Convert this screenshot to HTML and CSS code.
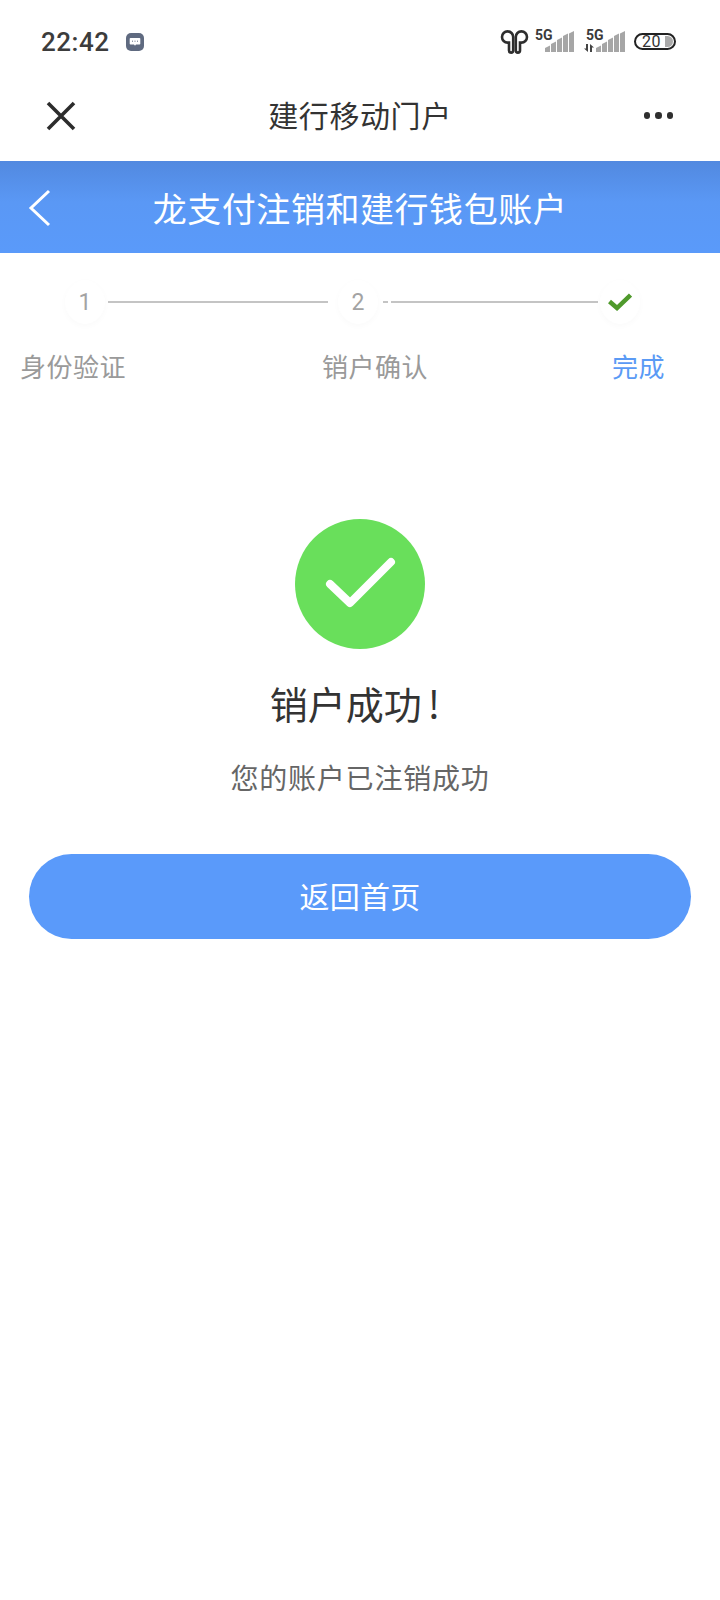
FILE: index.html
```html
<!DOCTYPE html>
<html lang="zh-CN">
<head>
<meta charset="utf-8">
<title>建行移动门户</title>
<link rel="stylesheet" href="styles.css">
</head>
<body>
<div class="status">
  <div class="status-left">
    <span class="time">22:42</span>
    <svg class="msg" width="18" height="18" viewBox="0 0 18 18"><rect width="18" height="18" rx="5" fill="#5f6a80"/><path d="M4.500 5h9a.8.8 0 0 1 .8.8v5a.8.8 0 0 1-.8.8H10l-1 1.200-1-1.200H4.500a.8.8 0 0 1-.8-.8v-5a.8.8 0 0 1 .8-.8z" fill="#fff"/><path d="M6 8.200h1M8.500 8.200h1M11 8.200h1" stroke="#5f6a80" stroke-width="1"/></svg>
  </div>
  <div class="status-right">
    <svg class="buds" width="27" height="24" viewBox="0 0 27 24" fill="none" stroke="#2e2e2e" stroke-width="2.600"><path d="M12.200 20.500V7A5.600 5.600 0 1 0 6.600 12.600H8v7.900a2.100 2.100 0 0 0 4.200 0z"/><path d="M14.800 20.500V7A5.600 5.600 0 1 1 20.400 12.600H19v7.900a2.100 2.100 0 0 1-4.200 0z"/></svg>
    <div class="net">
      <span class="g">5G</span>
      <svg class="bars" width="29" height="21" viewBox="0 0 29 21" fill="#a6a6a6"><path d="M0 21v-4l5-2.500V21zM6 21v-8l5-2.500V21zM12 21V9l5-2.500V21zM18 21V5l5-2.500V21zM24 21V2.500L29 0v21z"/></svg>
    </div>
    <div class="net last">
      <span class="g">5G</span>
      <svg class="arrows" width="10" height="8" viewBox="0 0 10 8" fill="#444"><path d="M2 0h2v8L0 4.500h2zM6 8V0l4 3.500H8V8z"/></svg>
      <svg class="bars" width="29" height="21" viewBox="0 0 29 21" fill="#a6a6a6"><path d="M0 21v-4l5-2.500V21zM6 21v-8l5-2.500V21zM12 21V9l5-2.500V21zM18 21V5l5-2.500V21zM24 21V2.500L29 0v21z"/></svg>
    </div>
    <div class="battery"><span class="level">20</span><i class="cap"></i></div>
  </div>
</div>
<nav class="nav">
  <svg class="close" width="30" height="30" viewBox="0 0 30 30" stroke="#2c2c2c" stroke-width="3.600"><path d="M2 2l26 26M28 2L2 28"/></svg>
  <div class="nav-title">建行移动门户</div>
  <div class="more"><i></i><i></i><i></i></div>
</nav>
<header class="head">
  <svg class="back" width="24" height="38" viewBox="0 0 24 38" fill="none" stroke="#fff" stroke-width="3"><path d="M21 2L3 19l18 17"/></svg>
  <h1>龙支付注销和建行钱包账户</h1>
</header>
<section class="steps">
  <div class="track">
    <span class="dot">1</span>
    <span class="line"></span>
    <span class="dot">2</span>
    <span class="line"></span>
    <span class="dot"><svg width="24" height="18" viewBox="0 0 24 18" fill="none" stroke="#4f9a2c" stroke-width="4.500"><path d="M1.500 8.500L9 15 22.500 2"/></svg></span>
  </div>
  <div class="labels">
    <span class="label">身份验证</span>
    <span class="label">销户确认</span>
    <span class="label on">完成</span>
  </div>
</section>
<main class="result">
  <svg class="ok" width="130" height="130" viewBox="0 0 130 130"><circle cx="65" cy="65" r="65" fill="#69df5b"/><path d="M35 65l20 19 41-41" fill="none" stroke="#fff" stroke-width="8" stroke-linecap="round" stroke-linejoin="round"/></svg>
  <h2>销户成功<span class="bang">!</span></h2>
  <p>您的账户已注销成功</p>
  <button class="btn">返回首页</button>
</main>
</body>
</html>
```
FILE: styles.css
```css
* { box-sizing: border-box; }
html, body { margin: 0; padding: 0; }
body {
  width: 720px;
  height: 1600px;
  background: #fff;
  font-family: "Noto Sans CJK SC", "Roboto", sans-serif;
  overflow: hidden;
}
.status {
  height: 72px;
  padding: 12px 44px 0 41px;
  display: flex;
  align-items: center;
  justify-content: space-between;
}
.status-left { display: flex; align-items: center; gap: 17px; }
.time {
  font-family: "Roboto", sans-serif;
  font-size: 26px;
  font-weight: 500;
  letter-spacing: .5px;
  color: #3c3c3c;
}
.msg { display: block; }
.status-right { display: flex; align-items: center; }
.buds { display: block; margin-right: 1px; overflow: visible; }
.net { position: relative; width: 45px; height: 26px; margin-right: 6px; display: block; }
.g {
  position: absolute;
  left: 6px;
  top: -2px;
  font-family: "Roboto", sans-serif;
  font-size: 14px;
  font-weight: 700;
  color: #3a3a3a;
}
.bars { position: absolute; right: 0; top: 2px; display: block; }
.arrows { position: absolute; left: 4px; bottom: 3px; display: block; }
.battery {
  width: 42px;
  height: 17px;
  margin: 0 0 1px 3px;
  border: 2px solid #222;
  border-radius: 9px;
  display: flex;
  align-items: center;
  padding-left: 6px;
  position: relative;
}
.level {
  font-family: "Roboto", sans-serif;
  font-size: 16px;
  line-height: 13px;
  color: #333;
  letter-spacing: .5px;
}
.cap {
  position: absolute;
  right: 1px;
  top: 1px;
  width: 8px;
  height: 11px;
  background: #aaa;
  border-radius: 0 6px 6px 0;
}
.nav {
  height: 89px;
  padding: 0 46px 2px 46px;
  display: flex;
  align-items: center;
  justify-content: space-between;
}
.close { display: block; }
.nav-title { font-size: 30px; color: #333; letter-spacing: .6px; margin-bottom: 4px; }
.more { display: flex; gap: 5px; width: 30px; }
.more i { width: 6.500px; height: 6.500px; border-radius: 50%; background: #2f2f2f; }
.head {
  height: 92px;
  background: linear-gradient(#5289e0, #5a98f5 45%, #5a9afa);
  display: flex;
  align-items: center;
  justify-content: center;
  position: relative;
}
.back { position: absolute; left: 28px; top: 28px; display: block; }
.head h1 { margin: 0; font-size: 34px; font-weight: 400; color: #fff; letter-spacing: .55px; }
.steps { height: 150px; padding-top: 27px; }
.track { display: flex; align-items: center; padding-left: 65px; }
.dot {
  width: 40px;
  height: 44px;
  border-radius: 50%;
  background: #fff;
  box-shadow: 0 2px 6px rgba(0,0,0,.025);
  display: flex;
  align-items: center;
  justify-content: center;
  font-family: "Roboto", sans-serif;
  font-size: 23px;
  color: #a3a3a3;
  flex: none;
}
.line { height: 2px; background: #c4c4c4; width: 220px; margin: 0 10px 0 3px; }
.line:nth-child(4) {
  width: 215px;
  margin: 0 2px 0 5px;
  background: linear-gradient(90deg, #c4c4c4 5px, transparent 5px, transparent 8px, #c4c4c4 8px);
}
.labels { display: flex; padding: 0 0 0 20px; margin-top: 23px; }
.label { font-size: 26px; color: #9a9a9a; line-height: 38px; letter-spacing: .5px; }
.label:nth-child(2) { margin-left: 196px; }
.label.on { margin-left: 184px; color: #5a9af5; }
.result {
  display: flex;
  flex-direction: column;
  align-items: center;
  padding: 116px 29px 0;
}
.ok { display: block; }
.result h2 { margin: 26px 0 0; font-size: 38px; line-height: 56px; font-weight: 400; color: #333; }
.bang { margin: 0 10px 0 6px; }
.result p { margin: 26px 0 0; font-size: 28px; line-height: 40px; color: #666; letter-spacing: .8px; }
.btn {
  margin-top: 57px;
  padding: 0 0 4px;
  width: 100%;
  height: 85px;
  border: 0;
  border-radius: 43px;
  background: #5a9afa;
  color: #fff;
  font-family: inherit;
  font-size: 30px;
  letter-spacing: .3px;
}
```
